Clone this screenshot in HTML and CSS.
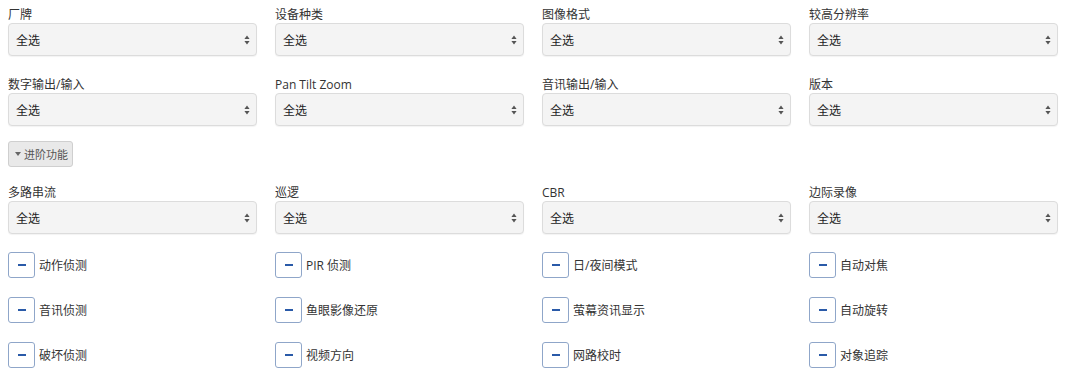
FILE: index.html
```html
<!DOCTYPE html>
<html lang="zh">
<head>
<meta charset="utf-8">
<link rel="stylesheet" href="styles.css">
</head>
<body>
<div class="page">
  <div class="grid">
    <div class="field"><div class="label">厂牌</div><div class="select"><span>全选</span><svg class="arr" width="6" height="10" viewBox="0 0 6 10"><path d="M3 0.5L5.6 4H0.4Z M3 9.5L5.6 6H0.4Z" fill="#555"/></svg></div></div>
    <div class="field"><div class="label">设备种类</div><div class="select"><span>全选</span><svg class="arr" width="6" height="10" viewBox="0 0 6 10"><path d="M3 0.5L5.6 4H0.4Z M3 9.5L5.6 6H0.4Z" fill="#555"/></svg></div></div>
    <div class="field"><div class="label">图像格式</div><div class="select"><span>全选</span><svg class="arr" width="6" height="10" viewBox="0 0 6 10"><path d="M3 0.5L5.6 4H0.4Z M3 9.5L5.6 6H0.4Z" fill="#555"/></svg></div></div>
    <div class="field"><div class="label">较高分辨率</div><div class="select"><span>全选</span><svg class="arr" width="6" height="10" viewBox="0 0 6 10"><path d="M3 0.5L5.6 4H0.4Z M3 9.5L5.6 6H0.4Z" fill="#555"/></svg></div></div>
  </div>
  <div class="grid row2">
    <div class="field"><div class="label">数字输出/输入</div><div class="select"><span>全选</span><svg class="arr" width="6" height="10" viewBox="0 0 6 10"><path d="M3 0.5L5.6 4H0.4Z M3 9.5L5.6 6H0.4Z" fill="#555"/></svg></div></div>
    <div class="field"><div class="label">Pan Tilt Zoom</div><div class="select"><span>全选</span><svg class="arr" width="6" height="10" viewBox="0 0 6 10"><path d="M3 0.5L5.6 4H0.4Z M3 9.5L5.6 6H0.4Z" fill="#555"/></svg></div></div>
    <div class="field"><div class="label">音讯输出/输入</div><div class="select"><span>全选</span><svg class="arr" width="6" height="10" viewBox="0 0 6 10"><path d="M3 0.5L5.6 4H0.4Z M3 9.5L5.6 6H0.4Z" fill="#555"/></svg></div></div>
    <div class="field"><div class="label">版本</div><div class="select"><span>全选</span><svg class="arr" width="6" height="10" viewBox="0 0 6 10"><path d="M3 0.5L5.6 4H0.4Z M3 9.5L5.6 6H0.4Z" fill="#555"/></svg></div></div>
  </div>
  <div class="adv"><button class="advbtn"><svg class="caret" width="6" height="4" viewBox="0 0 6 4"><path d="M0 0H6L3 4Z" fill="#666"/></svg>进阶功能</button></div>
  <div class="grid">
    <div class="field"><div class="label">多路串流</div><div class="select"><span>全选</span><svg class="arr" width="6" height="10" viewBox="0 0 6 10"><path d="M3 0.5L5.6 4H0.4Z M3 9.5L5.6 6H0.4Z" fill="#555"/></svg></div></div>
    <div class="field"><div class="label">巡逻</div><div class="select"><span>全选</span><svg class="arr" width="6" height="10" viewBox="0 0 6 10"><path d="M3 0.5L5.6 4H0.4Z M3 9.5L5.6 6H0.4Z" fill="#555"/></svg></div></div>
    <div class="field"><div class="label">CBR</div><div class="select"><span>全选</span><svg class="arr" width="6" height="10" viewBox="0 0 6 10"><path d="M3 0.5L5.6 4H0.4Z M3 9.5L5.6 6H0.4Z" fill="#555"/></svg></div></div>
    <div class="field"><div class="label">边际录像</div><div class="select"><span>全选</span><svg class="arr" width="6" height="10" viewBox="0 0 6 10"><path d="M3 0.5L5.6 4H0.4Z M3 9.5L5.6 6H0.4Z" fill="#555"/></svg></div></div>
  </div>
  <div class="grid checks">
    <div class="check"><span class="box"></span>动作侦测</div>
    <div class="check"><span class="box"></span>PIR 侦测</div>
    <div class="check"><span class="box"></span>日/夜间模式</div>
    <div class="check"><span class="box"></span>自动对焦</div>
    <div class="check"><span class="box"></span>音讯侦测</div>
    <div class="check"><span class="box"></span>鱼眼影像还原</div>
    <div class="check"><span class="box"></span>萤幕资讯显示</div>
    <div class="check"><span class="box"></span>自动旋转</div>
    <div class="check"><span class="box"></span>破坏侦测</div>
    <div class="check"><span class="box"></span>视频方向</div>
    <div class="check"><span class="box"></span>网路校时</div>
    <div class="check"><span class="box"></span>对象追踪</div>
  </div>
</div>
</body>
</html>
```
FILE: styles.css
```css
html, body {
  margin: 0;
  padding: 0;
  background: #fff;
}
body {
  padding: 8px 22px 0 8px;
  font-family: "Open Sans", "Noto Sans CJK SC", sans-serif;
  color: #333;
  font-size: 12px;
}
.grid {
  display: grid;
  grid-template-columns: repeat(4, 1fr);
  column-gap: 18px;
}
.row2 {
  margin-top: 22px;
}
.label {
  height: 15px;
  line-height: 14px;
  font-size: 12px;
  color: #333;
  white-space: nowrap;
}
.select {
  height: 33px;
  box-sizing: border-box;
  border: 1px solid #dcdcdc;
  border-radius: 4px;
  background: #f4f4f4;
  box-shadow: 0 1px 1px rgba(0,0,0,0.05);
  display: flex;
  align-items: center;
  justify-content: space-between;
  padding: 0 6px 0 7px;
  font-size: 12px;
  color: #222;
}
.arr {
  display: block;
}
.adv {
  margin-top: 15px;
  margin-bottom: 19px;
  height: 26px;
}
.advbtn {
  height: 26px;
  width: 65px;
  box-sizing: border-box;
  border: 1px solid #cfcfcf;
  border-radius: 3px;
  background: #e9e9e9;
  font-family: "Open Sans", "Noto Sans CJK SC", sans-serif;
  font-size: 11px;
  color: #555;
  padding: 0 0 0 6px;
  display: flex;
  align-items: center;
  gap: 3px;
}
.caret {
  display: block;
  flex: none;
}
.checks {
  margin-top: 18px;
  row-gap: 19px;
}
.check {
  display: flex;
  align-items: center;
  height: 26px;
  gap: 4px;
  font-size: 12px;
  color: #333;
}
.box {
  width: 27px;
  height: 26px;
  box-sizing: border-box;
  border: 1px solid #8fa6c9;
  border-radius: 3px;
  background: #fff;
  position: relative;
  flex: none;
}
.box::after {
  content: "";
  position: absolute;
  left: 9px;
  top: 11px;
  width: 8px;
  height: 2px;
  background: #2a5aa8;
}
```
